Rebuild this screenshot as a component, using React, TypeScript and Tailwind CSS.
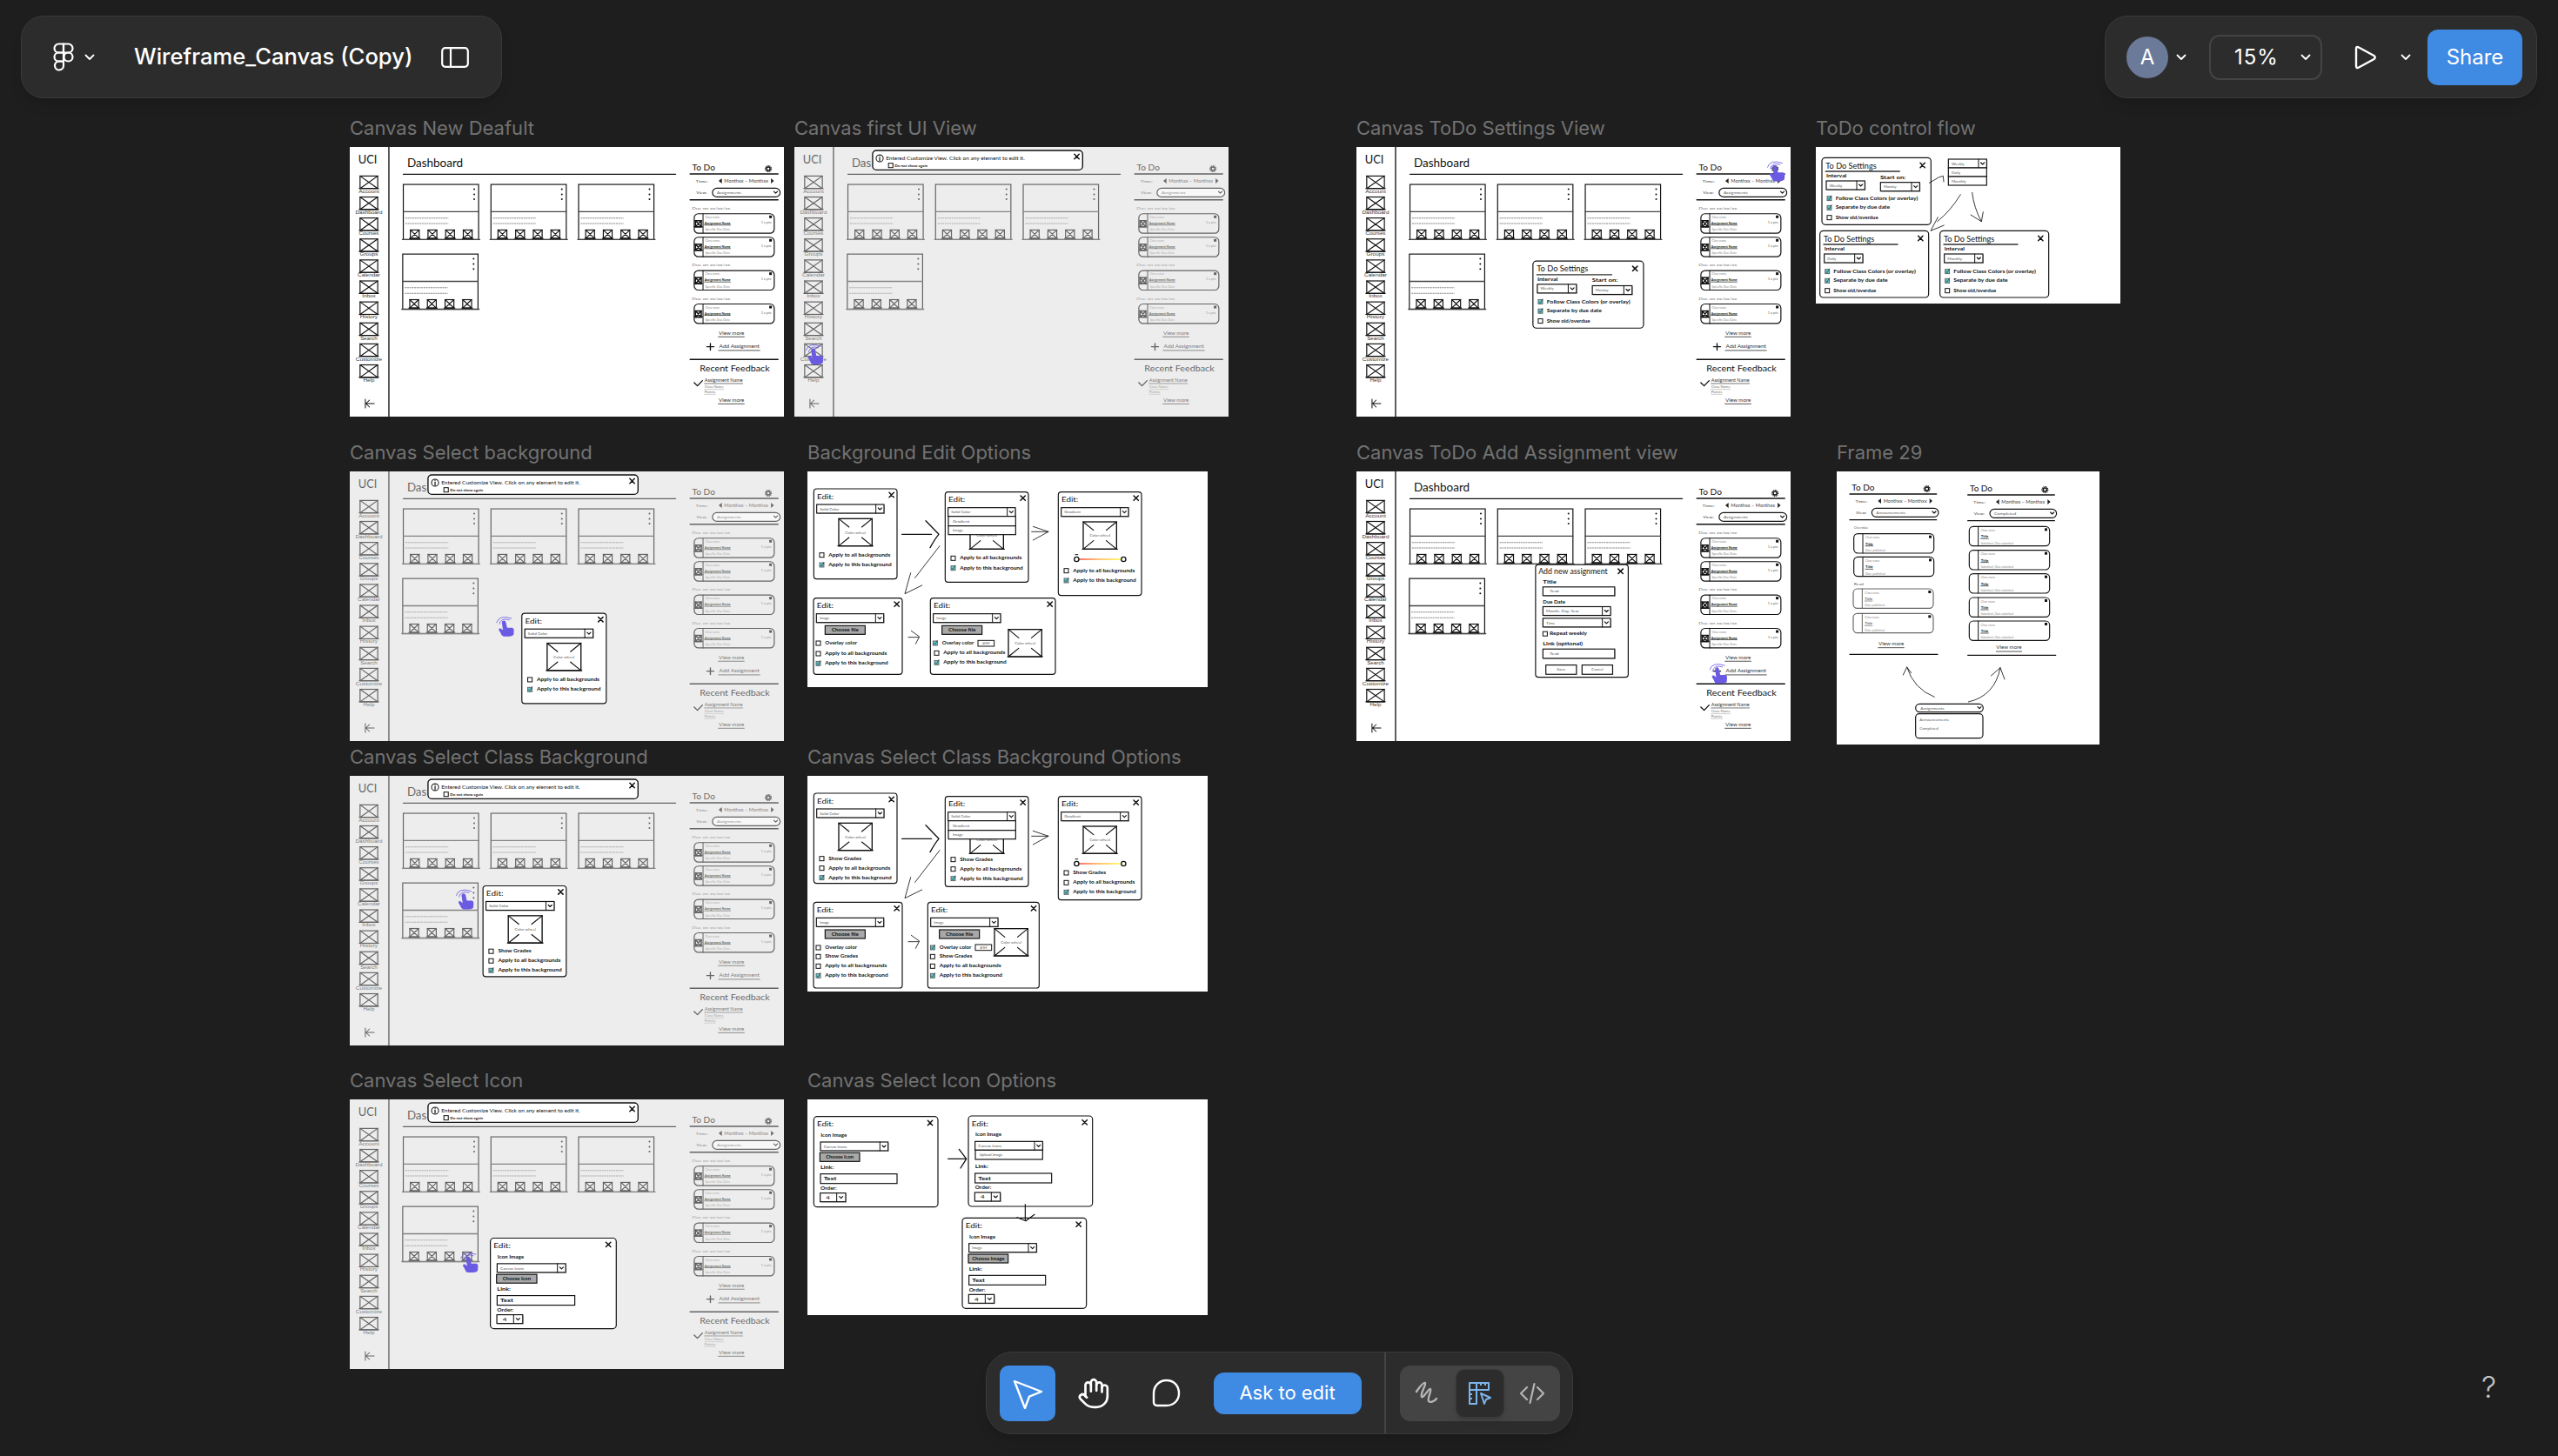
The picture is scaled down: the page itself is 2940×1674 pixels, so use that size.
import React from "react";
import { Hand } from "lucide-react";

const HW = '"Lato","Open Sans",sans-serif';
const AR = '"Liberation Sans",Arial,sans-serif';

type TP = { x: number; y: number; s?: number; w?: number; c?: string; b?: boolean; a?: "start" | "middle"; f?: string; children: React.ReactNode };
function T({ x, y, s = 16, w, c = "#111", b = false, a = "start", f = HW, children }: TP) {
  return (
    <text x={x} y={y} fontSize={s} fill={c} fontWeight={b ? 700 : 400} textAnchor={a} fontFamily={f} textLength={w} lengthAdjust={w ? "spacingAndGlyphs" : undefined}>
      {children}
    </text>
  );
}
function L({ d, w = 3, c = "#111" }: { d: string; w?: number; c?: string }) {
  return <path d={d} fill="none" stroke={c} strokeWidth={w} strokeLinecap="round" strokeLinejoin="round" />;
}
function R({ x, y, w, h, r = 0, sw = 3.5, fill = "#fff", c = "#111" }: { x: number; y: number; w: number; h: number; r?: number; sw?: number; fill?: string; c?: string }) {
  return <rect x={x} y={y} width={w} height={h} rx={r} fill={fill} stroke={c} strokeWidth={sw} />;
}
function XBox({ x, y, w, h, sw = 3.5, fill = "none" }: { x: number; y: number; w: number; h: number; sw?: number; fill?: string }) {
  return (
    <g>
      <rect x={x} y={y} width={w} height={h} fill={fill} stroke="#111" strokeWidth={sw} />
      <L w={sw} d={`M${x} ${y}L${x + w} ${y + h}M${x + w} ${y}L${x} ${y + h}M${x - 3} ${y + h}H${x + w + 3}`} />
    </g>
  );
}
function CloseX({ x, y, z = 8, w = 4.5 }: { x: number; y: number; z?: number; w?: number }) {
  return <L w={w} d={`M${x - z} ${y - z}L${x + z} ${y + z}M${x + z} ${y - z}L${x - z} ${y + z}`} />;
}
function Chev({ x, y, z = 7 }: { x: number; y: number; z?: number }) {
  return <L w={3.5} d={`M${x - z} ${y - z / 2}L${x} ${y + z / 2}L${x + z} ${y - z / 2}`} />;
}
function Select({ x, y, w, h = 30, label, tw, s = 12 }: { x: number; y: number; w: number; h?: number; label: string; tw?: number; s?: number }) {
  return (
    <g>
      <rect x={x + 3} y={y + 3} width={w} height={h} fill="#bdbdbd" />
      <R x={x} y={y} w={w} h={h} sw={3.5} />
      <L w={3} d={`M${x + w - 28} ${y}V${y + h}`} />
      <Chev x={x + w - 14} y={y + h / 2} z={6} />
      <T x={x + 11} y={y + h / 2 + 5} s={s} c="#555" w={tw}>{label}</T>
    </g>
  );
}
function Check({ x, y, on = false, z = 15 }: { x: number; y: number; on?: boolean; z?: number }) {
  return (
    <g>
      <rect x={x} y={y} width={z} height={z} fill={on ? "#63c9cf" : "#fff"} stroke={on ? "#555" : "#111"} strokeWidth={on ? 2.5 : 3} />
      {on && <L w={2} c="#222" d={`M${x + 3} ${y + 8}L${x + 7} ${y + 12}L${x + z} ${y - 2}`} />}
    </g>
  );
}
function Row({ x, y, label, on, w, tx = 31 }: { x: number; y: number; label: string; on?: boolean; w: number; tx?: number }) {
  return (
    <g>
      <Check x={x} y={y - 12} on={on} />
      <T x={x + tx} y={y} s={19} w={w} b>{label}</T>
    </g>
  );
}
function ImageBox({ x, y, w = 115, h = 94, label = "Color wheel" }: { x: number; y: number; w?: number; h?: number; label?: string }) {
  const cx = x + w / 2;
  const cy = y + h / 2;
  return (
    <g>
      <R x={x} y={y} w={w} h={h} sw={4} />
      <L w={3.5} d={`M${x} ${y}L${cx - 22} ${cy - 18}M${x + w} ${y}L${cx + 22} ${cy - 18}M${x} ${y + h}L${cx - 22} ${cy + 18}M${x + w} ${y + h}L${cx + 22} ${cy + 18}M${x - 3} ${y + h}H${x + w + 3}`} />
      <T x={cx} y={cy + 5} s={12} c="#666" a="middle" w={72}>{label}</T>
    </g>
  );
}
function GrayBtn({ x, y, w, h = 30, label, tw }: { x: number; y: number; w: number; h?: number; label: string; tw: number }) {
  return (
    <g>
      <R x={x} y={y} w={w} h={h} fill="#a8a8a8" sw={3.5} />
      <T x={x + w / 2} y={y + h / 2 + 6} s={18} a="middle" w={tw} b>{label}</T>
    </g>
  );
}

type Rw = { label: string; y: number; on?: boolean; w?: number; cx?: number; tx?: number };
const ALL = "Apply to all backgrounds";
const THIS = "Apply to this background";
function EditDialog({ x, y, w = 287, h = 311, sel = "Solid Color", rows, img, slider, button, open, input }: { x: number; y: number; w?: number; h?: number; sel?: string; rows: Rw[]; img?: [number, number]; slider?: boolean; button?: boolean; open?: boolean; input?: boolean }) {
  return (
    <g transform={`translate(${x} ${y})`}>
      <R x={0} y={0} w={w} h={h} r={10} sw={3.5} />
      <T x={11} y={35} s={25} w={58}>Edit:</T>
      <CloseX x={w - 19} y={21} />
      {img && <ImageBox x={img[0]} y={img[1]} />}
      <Select x={10} y={54} w={232} label={sel} tw={sel === "Solid Color" ? 66 : sel === "Gradient" ? 56 : 34} />
      {open && (
        <g>
          <R x={11} y={84} w={232} h={33} sw={3.5} />
          <R x={11} y={117} w={232} h={30} sw={3.5} />
          <T x={26} y={105} s={12} c="#555" w={58}>Gradient</T>
          <T x={26} y={136} s={12} c="#555" w={36}>Image</T>
        </g>
      )}
      {button && <GrayBtn x={40} y={95} w={138} label="Choose file" tw={94} />}
      {slider && (
        <g>
          <defs>
            <linearGradient id="hue" x1="0" x2="1" y1="0" y2="0">
              <stop offset="0" stopColor="#f22" />
              <stop offset="0.5" stopColor="#fa3" />
              <stop offset="1" stopColor="#ff2" />
            </linearGradient>
          </defs>
          <rect x={63} y={230} width={162} height={4} fill="url(#hue)" />
          <circle cx={63} cy={232} r={8} fill="#fff" stroke="#111" strokeWidth={4} />
          <circle cx={225} cy={232} r={8} fill="#fff" stroke="#111" strokeWidth={4} />
          <L w={3} d="M59 216H67" />
        </g>
      )}
      {input && (
        <g>
          <R x={164} y={146} w={56} h={20} sw={3} />
          <T x={192} y={160} s={10} c="#666" a="middle" w={26}>#fff</T>
        </g>
      )}
      {rows.map((r) => (
        <Row key={r.label} x={r.cx ?? 20} y={r.y} label={r.label} on={r.on} w={r.w ?? 213} tx={r.tx ?? 31} />
      ))}
    </g>
  );
}
function IconDialog({ x, y, sel = "Canvas Icons", btn = "Choose Icon", drop }: { x: number; y: number; sel?: string; btn?: string; drop?: boolean }) {
  return (
    <g transform={`translate(${x} ${y})`}>
      <R x={0} y={0} w={428} h={312} r={12} sw={3.5} />
      <T x={11} y={35} s={25} w={58}>Edit:</T>
      <CloseX x={401} y={22} />
      <T x={24} y={70} s={18} w={90} b>Icon Image</T>
      {!drop && <GrayBtn x={21} y={125} w={137} label={btn} tw={btn === "Choose Icon" ? 96 : 112} />}
      <Select x={23} y={88} w={233} label={sel} tw={sel === "Image" ? 34 : 80} />
      {drop && (
        <g>
          <R x={24} y={118} w={232} h={32} sw={3.5} />
          <T x={38} y={139} s={12} c="#555" w={80}>Upload Image</T>
        </g>
      )}
      <T x={23} y={181} s={18} w={46} b>Link:</T>
      <R x={23} y={198} w={264} h={33} sw={3.5} />
      <T x={34} y={221} s={18} w={44} b>Text</T>
      <T x={23} y={253} s={18} w={56} b>Order:</T>
      <rect x={25} y={267} width={88} height={30} fill="#bdbdbd" />
      <R x={22} y={264} w={88} h={30} sw={3.5} />
      <L w={3} d="M79 264V294" />
      <T x={49} y={286} s={18} a="middle" w={14}>4</T>
      <Chev x={94} y={279} z={6} />
    </g>
  );
}
function SettingsDialog({ x, y, sel, start, w = 376, h = 231 }: { x: number; y: number; sel: string; start?: boolean; w?: number; h?: number }) {
  return (
    <g transform={`translate(${x} ${y})`}>
      <R x={0} y={0} w={w} h={h} r={12} sw={3.5} />
      <T x={13} y={37} s={26} w={175}>To Do Settings</T>
      <L w={4} d="M13 47H268" c="#333" />
      <CloseX x={347} y={26} />
      <T x={15} y={68} s={18} w={70} b>Interval</T>
      <Select x={15} y={80} w={133} label={sel} tw={sel === "Monthly" ? 50 : sel === "Daily" ? 30 : 44} />
      {start && (
        <g>
          <T x={201} y={73} s={18} w={88} b>Start on:</T>
          <Select x={202} y={85} w={135} label="Monday" tw={44} />
        </g>
      )}
      <Row x={18} y={145} label="Follow Class Colors (or overlay)" on w={284} tx={29} />
      <Row x={18} y={177} label="Separate by due date" on w={187} tx={29} />
      <Row x={18} y={211} label="Show old/overdue" w={147} tx={29} />
    </g>
  );
}
function AddDialog({ x, y }: { x: number; y: number }) {
  return (
    <g transform={`translate(${x} ${y})`}>
      <R x={0} y={0} w={315} h={388} r={10} sw={3.5} />
      <T x={10} y={33} s={26} w={235}>Add new assignment</T>
      <CloseX x={289} y={23} />
      <T x={25} y={65} s={18} w={46} b>Title</T>
      <rect x={28} y={80} width={244} height={30} fill="#bdbdbd" />
      <R x={25} y={77} w={244} h={30} />
      <T x={48} y={96} s={12} c="#555" w={32}>Text</T>
      <T x={25} y={134} s={18} w={76} b>Due Date</T>
      <Select x={25} y={145} w={230} label="Month, Day, Year" tw={112} />
      <Select x={25} y={185} w={230} label="Time" tw={30} />
      <Check x={25} y={231} />
      <T x={48} y={243} s={18} w={127} b>Repeat weekly</T>
      <T x={25} y={279} s={18} w={135} b>Link (optional)</T>
      <rect x={28} y={294} width={244} height={32} fill="#bdbdbd" />
      <R x={25} y={291} w={244} h={32} />
      <T x={48} y={311} s={12} c="#555" w={32}>Text</T>
      <R x={35} y={346} w={104} h={32} />
      <T x={87} y={366} s={12} c="#555" a="middle" w={30}>Save</T>
      <R x={158} y={346} w={104} h={32} />
      <T x={210} y={366} s={12} c="#555" a="middle" w={40}>Cancel</T>
    </g>
  );
}
function Pointer({ x, y }: { x: number; y: number }) {
  return (
    <g transform={`translate(${x} ${y})`}>
      <path d="M-24 5Q-15 -25 28 -10M-15 10Q-8 -15 20 -5" fill="none" stroke="#6a5be2" strokeWidth={2.5} />
      <path d="M-6 4Q-6 -3 1 -3Q7 -3 8 4L12 22L30 22Q36 24 35 32L34 46Q30 52 18 52L0 52Q-8 50 -10 40L-16 30Q-18 22 -10 24L-2 30Z" fill="#6a5be2" />
    </g>
  );
}
function Banner() {
  return (
    <g>
      <R x={303} y={160} w={714} h={67} r={13} sw={4} />
      <circle cx={327} cy={187} r={12} fill="#fff" stroke="#111" strokeWidth={3} />
      <L w={3.5} d="M327 184V195M327 178V179" />
      <T x={348} y={193} s={19} w={472}>Entered Customize View. Click on any element to edit it.</T>
      <Check x={357} y={204} />
      <T x={378} y={217} s={13} b w={112}>Do not show again</T>
      <CloseX x={997} y={181} />
    </g>
  );
}
function Gear({ x, y }: { x: number; y: number }) {
  return (
    <g>
      <circle cx={x} cy={y} r={10} fill="none" stroke="#111" strokeWidth={4} strokeDasharray="3 2" />
      <circle cx={x} cy={y} r={6} fill="none" stroke="#111" strokeWidth={4} />
    </g>
  );
}
function TodoHead({ x, y, view }: { x: number; y: number; view: string }) {
  return (
    <g>
      <T x={x + 7} y={y - 12} s={26} w={78}>To Do</T>
      <Gear x={x + 266} y={y - 18} />
      <L w={4} d={`M${x} ${y}H${x + 299}`} />
      <T x={x + 19} y={y + 29} s={13} c="#444" w={42}>Time:</T>
      <path d={`M${x + 108} ${y + 15}V${y + 33}L${x + 97} ${y + 24}Z`} fill="#222" />
      <T x={x + 116} y={y + 29} s={14} c="#444" w={150}>Monthxx – Monthxx</T>
      <path d={`M${x + 275} ${y + 15}V${y + 33}L${x + 285} ${y + 24}Z`} fill="#222" />
      <T x={x + 21} y={y + 68} s={13} c="#444" w={37}>View:</T>
      <R x={x + 76} y={y + 49} w={230} h={30} r={15} sw={3.5} />
      <T x={x + 91} y={y + 68} s={13} c="#555" w={view === "Assignments" ? 82 : view === "Completed" ? 76 : 100}>{view}</T>
      <Chev x={x + 291} y={y + 63} z={6} />
      <L w={4} d={`M${x} ${y + 89}H${x + 299}`} />
    </g>
  );
}
function Card({ x, y }: { x: number; y: number }) {
  return (
    <g>
      <R x={x} y={y} w={256} h={190} sw={3.5} fill="none" />
      <L w={4} c="#444" d={`M${x} ${y + 94}H${x + 256}M${x - 3} ${y + 190}H${x + 260}`} />
      {[16, 34, 51].map((d) => (
        <circle key={d} cx={x + 241} cy={y + d} r={3} fill="#111" />
      ))}
      <path d={`M${x + 7} ${y + 116}H${x + 153}M${x + 7} ${y + 135}H${x + 153}`} stroke="#888" strokeWidth={3} strokeDasharray="6 2" fill="none" />
      {[39, 99, 159, 219].map((d) => (
        <XBox key={d} x={x + d - 15} y={y + 157} w={30} h={29} sw={3.5} />
      ))}
    </g>
  );
}
function TodoCard({ y, label }: { y: number; label?: string }) {
  return (
    <g>
      {label && <T x={1200} y={y - 14} s={12} c="#777" w={130}>{label}</T>}
      <R x={1208} y={y} w={272} h={67} r={14} sw={3.5} fill="none" />
      <L w={3} d={`M1238 ${y}V${y + 67}`} />
      <XBox x={1212} y={y + 24} w={20} h={21} sw={4.5} />
      <T x={1245} y={y + 15} s={10} c="#888" w={50}>Class name</T>
      <T x={1243} y={y + 36} s={12} b w={88}>Assignment Name</T>
      <L w={2} d={`M1243 ${y + 39}H1331`} />
      <T x={1435} y={y + 33} s={11} c="#666" w={35}>1 x pts</T>
      <T x={1245} y={y + 58} s={10} c="#888" w={85}>Specific Due Date</T>
      <rect x={1463} y={y + 6} width={9} height={9} fill="#111" />
    </g>
  );
}
const NAV = [
  ["Account", 70],
  ["Dashboard", 92],
  ["Courses", 68],
  ["Groups", 62],
  ["Calendar", 76],
  ["Inbox", 46],
  ["History", 60],
  ["Search", 58],
  ["Customize", 90],
  ["Help", 38],
] as const;
function CanvasBase({ dim }: { dim?: boolean }) {
  return (
    <g>
      <L w={4} d="M170 148V1077" />
      <T x={66} y={205} s={38} w={64}>UCI</T>
      {NAV.map(([n, w], i) => (
        <g key={n}>
          <XBox x={72} y={248 + i * 72.3} w={60} h={43} sw={3.5} />
          <T x={102} y={306 + i * 72.3} s={18} c="#333" a="middle" f={AR} w={w}>{n}</T>
        </g>
      ))}
      <L w={3} d="M90 1017V1047M90 1032H120M104 1020L92 1032L104 1044" />
      <T x={232} y={217} s={40} w={dim ? 66 : 190}>{dim ? "Das" : "Dashboard"}</T>
      <L w={4} d="M219 242H1145" />
      <Card x={219} y={277} />
      <Card x={517} y={277} />
      <Card x={815} y={277} />
      <Card x={217} y={517} />
      <TodoHead x={1194} y={241} view="Assignments" />
      <TodoCard y={378} label="Due on xx/xx/xx" />
      <TodoCard y={459} />
      <TodoCard y={574} label="Due on xx/xx/xx" />
      <TodoCard y={689} label="Due on xx/xx/xx" />
      <T x={1291} y={795} s={15} c="#333" w={87}>View more</T>
      <L w={2.5} c="#333" d="M1290 802H1378" />
      <L w={4} d="M1263 825V848M1251 836H1275" />
      <T x={1293} y={840} s={17} c="#333" w={137}>Add Assignment</T>
      <L w={2.5} c="#333" d="M1291 849H1431" />
      <L w={4} d="M1194 880H1493" />
      <T x={1227} y={921} s={30} w={238}>Recent Feedback</T>
      <L w={4} d="M1208 960L1219 971L1236 953" />
      <T x={1243} y={958} s={15} c="#333" w={130}>Assignment Name</T>
      <L w={2} c="#333" d="M1243 963H1373" />
      <T x={1243} y={978} s={10} c="#777" w={65}>Class Name</T>
      <L w={1.5} c="#999" d="M1243 983H1308" />
      <T x={1243} y={995} s={10} c="#777" w={37}>Points</T>
      <L w={1.5} c="#999" d="M1243 1000H1280" />
      <T x={1291} y={1025} s={15} c="#333" w={87}>View more</T>
      <L w={2.5} c="#333" d="M1290 1033H1378" />
    </g>
  );
}

function Sheet({ className, label, vb, bg = "bg-white", children }: { className: string; label: string; vb: string; bg?: string; children: React.ReactNode }) {
  return (
    <div className={`absolute ${className} ${bg}`}>
      <div className="absolute left-0 bottom-full mb-[7px] whitespace-nowrap font-['Inter'] text-[22px] leading-[30px] text-[#727272]">{label}</div>
      <svg className="block w-full h-full" viewBox={vb} preserveAspectRatio="none">
        {children}
      </svg>
    </div>
  );
}
function CanvasSheet({ className, label, dim, children }: { className: string; label: string; dim?: boolean; children?: React.ReactNode }) {
  return (
    <Sheet className={`${className} w-[499px] h-[310px]`} label={label} vb="37 148 1476 929" bg={dim ? "bg-[#ededed]" : "bg-white"}>
      <g opacity={dim ? 0.62 : 1}>
        <CanvasBase dim={dim} />
      </g>
      {dim && <Banner />}
      {children}
    </Sheet>
  );
}
function Options({ className, label, grades }: { className: string; label: string; grades?: boolean }) {
  const a: Rw[] = grades
    ? [
        { label: "Show Grades", y: 230, w: 113 },
        { label: ALL, y: 263 },
        { label: THIS, y: 296, on: true, w: 217 },
      ]
    : [
        { label: ALL, y: 233 },
        { label: THIS, y: 267, on: true, w: 217 },
      ];
  const b: Rw[] = a.map((r) => ({ ...r, y: r.y + (grades ? -8 : 0) }));
  const c: Rw[] = grades
    ? [
        { label: "Show Grades", y: 268, w: 113 },
        { label: ALL, y: 302 },
        { label: THIS, y: 335, on: true, w: 217 },
      ]
    : [
        { label: ALL, y: 276 },
        { label: THIS, y: 310, on: true, w: 217 },
      ];
  const d: Rw[] = grades
    ? [
        { label: "Overlay color", y: 161, cx: 9, w: 110 },
        { label: "Show Grades", y: 192, cx: 9, w: 113 },
        { label: ALL, y: 225, cx: 9 },
        { label: THIS, y: 258, on: true, cx: 9, w: 217 },
      ]
    : [
        { label: "Overlay color", y: 160, cx: 9, w: 110 },
        { label: ALL, y: 196, cx: 9 },
        { label: THIS, y: 230, on: true, cx: 9, w: 217 },
      ];
  const e: Rw[] = grades
    ? [
        { label: "Overlay color", y: 161, on: true, cx: 9, w: 110 },
        { label: "Show Grades", y: 192, cx: 9, w: 113 },
        { label: ALL, y: 225, cx: 9 },
        { label: THIS, y: 258, on: true, cx: 9, w: 217 },
      ]
    : [
        { label: "Overlay color", y: 160, on: true, cx: 9, w: 110 },
        { label: ALL, y: 194, cx: 14 },
        { label: THIS, y: 227, on: true, cx: 14, w: 217 },
      ];
  const dh = grades ? 296 : 263;
  const dy = grades ? 436 : 437;
  return (
    <Sheet className={`${className} w-[460px] h-[248px]`} label={label} vb="0 0 1380 744">
      <EditDialog x={22} y={60} rows={a} img={[86, 103]} />
      <EditDialog x={475} y={71} rows={b} img={[86, 103]} open />
      <EditDialog x={865} y={71} h={357} sel="Gradient" rows={c} img={[86, 103]} slider />
      <EditDialog x={21} y={dy} w={306} h={dh} sel="Image" rows={d} button />
      <EditDialog x={grades ? 415 : 424} y={dy} w={grades ? 384 : 431} h={dh} sel="Image" rows={e} button input img={grades ? [230, 91] : [269, 108]} />
      <L w={4} d="M326 217H428M408 170L453 217Q440 232 423 263" />
      <L w={2.5} d="M773 208H831M778 190L831 208L778 237" />
      <L w={2.5} d="M456 257L371 367M356 350L336 422L395 393" />
      <L w={2.5} d="M348 572H383M358 550L386 570L373 595" />
    </Sheet>
  );
}
function MiniCard({ x, y, w, title, sub, subw, c = "#111" }: { x: number; y: number; w: number; title: string; sub: string; subw: number; c?: string }) {
  return (
    <g>
      <R x={x} y={y} w={w} h={67} r={14} sw={3.5} fill="none" c={c} />
      <L w={3} c={c} d={`M${x + 31} ${y}V${y + 67}`} />
      <T x={x + 40} y={y + 17} s={11} c="#888" w={50}>Class name</T>
      <T x={x + 40} y={y + 39} s={13} b c={c} w={26}>{title}</T>
      <L w={2} c={c} d={`M${x + 40} ${y + 42}H${x + 66}`} />
      <T x={x + 40} y={y + 61} s={11} c="#888" w={subw}>{sub}</T>
      <rect x={x + w - 17} y={y + 6} width={9} height={9} fill="#111" />
    </g>
  );
}

/* ----------- chrome icons ----------- */
const SmallChev = () => (
  <svg width="12" height="8" viewBox="0 0 12 8" fill="none" stroke="#fff" strokeWidth="1.8" strokeLinecap="round" strokeLinejoin="round">
    <path d="M1.5 1.5L6 6L10.5 1.5" />
  </svg>
);
const FigmaLogo = () => (
  <svg width="24" height="33" viewBox="0 0 24 33" fill="none" stroke="#fff" strokeWidth="2.2" strokeLinejoin="round">
    <path d="M12 1.5H6.5a5 5 0 0 0 0 10H12z" />
    <path d="M12 1.5h5.5a5 5 0 0 1 0 10H12z" />
    <path d="M12 11.5H6.5a5 5 0 0 0 0 10H12z" />
    <circle cx="17.5" cy="16.5" r="5" />
    <path d="M12 21.5H6.5a5 5 0 1 0 5.5 5z" />
  </svg>
);
const PanelIcon = () => (
  <svg width="32" height="24" viewBox="0 0 32 24" fill="none" stroke="#fff" strokeWidth="2.2">
    <rect x="1.2" y="1.2" width="29.6" height="21.6" rx="3.5" />
    <path d="M11 1.2V22.8" />
  </svg>
);
const PlayIcon = () => (
  <svg width="26" height="28" viewBox="0 0 26 28" fill="none" stroke="#fff" strokeWidth="2.4" strokeLinejoin="round">
    <path d="M2 4Q2 1 5 2.5L22.5 12Q25 14 22.5 16L5 25.5Q2 27 2 24Z" />
  </svg>
);

export default function App() {
  return (
    <div className="relative w-[2940px] h-[1674px] overflow-hidden bg-[#1e1e1e] font-['Inter',sans-serif] text-white">
      {/* free canvas */}
      <CanvasSheet className="left-[402px] top-[169px]" label="Canvas New Deafult" />
      <CanvasSheet className="left-[913px] top-[169px]" label="Canvas first UI View" dim>
        <Pointer x={100} y={845} />
      </CanvasSheet>
      <CanvasSheet className="left-[1559px] top-[169px]" label="Canvas ToDo Settings View">
        <Pointer x={1458} y={214} />
        <SettingsDialog x={637} y={541} sel="Weekly" start />
      </CanvasSheet>
      <Sheet className="left-[2087px] top-[169px] w-[350px] h-[180px]" label="ToDo control flow" vb="0 0 1050 540">
        <SettingsDialog x={21} y={37} sel="Weekly" start />
        <SettingsDialog x={14} y={289} sel="Daily" w={375} h={230} />
        <SettingsDialog x={428} y={289} sel="Monthly" w={375} h={230} />
        <Select x={457} y={42} w={132} label="Weekly" tw={44} />
        <R x={457} y={72} w={132} h={30} sw={3.5} />
        <R x={457} y={102} w={132} h={30} sw={3.5} />
        <T x={468} y={92} s={12} c="#555" w={30}>Daily</T>
        <T x={468} y={122} s={12} c="#555" w={50}>Monthly</T>
        <L w={2.5} d="M391 124L425 104L439 100L441 120" />
        <L w={2.5} d="M499 164Q465 220 419 257M421 242L396 289L442 270" />
        <L w={2.5} d="M539 157Q545 210 571 257M534 234L571 257L577 224" />
      </Sheet>

      <CanvasSheet className="left-[402px] top-[542px]" label="Canvas Select background" dim>
        <Pointer x={560} y={665} />
        <EditDialog x={622} y={637} rows={[{ label: ALL, y: 233 }, { label: THIS, y: 267, on: true, w: 217 }]} img={[86, 103]} />
      </CanvasSheet>
      <Options className="left-[928px] top-[542px]" label="Background Edit Options" />
      <CanvasSheet className="left-[1559px] top-[542px]" label="Canvas ToDo Add Assignment view">
        <AddDialog x={646} y={469} />
        <Pointer x={1262} y={827} />
      </CanvasSheet>
      <Sheet className="left-[2111px] top-[542px] w-[302px] h-[314px]" label="Frame 29" vb="0 0 906 942">
        <TodoHead x={45} y={78} view="Announcements" />
        <T x={59} y={197} s={12} c="#666" w={50}>Overdue</T>
        <MiniCard x={59} y={215} w={276} title="Title" sub="Date published" subw={68} />
        <MiniCard x={59} y={295} w={276} title="Title" sub="Date published" subw={68} />
        <T x={59} y={393} s={12} c="#666" w={34}>Read</T>
        <MiniCard x={57} y={405} w={276} title="Title" sub="Date published" subw={68} c="#666" />
        <MiniCard x={57} y={490} w={276} title="Title" sub="Date published" subw={68} c="#666" />
        <T x={144} y={599} s={16} c="#333" w={88}>View more</T>
        <L w={2.5} c="#333" d="M143 608H232" />
        <L w={4} d="M45 631H348" />

        <TodoHead x={452} y={81} view="Completed" />
        {[190, 272, 353, 435, 516].map((y) => (
          <MiniCard key={y} x={457} y={y} w={277} title="Title" sub="Submitted | Date submitted" subw={112} />
        ))}
        <T x={550} y={612} s={16} c="#333" w={88}>View more</T>
        <L w={2.5} c="#333" d="M550 621H638" />
        <L w={4} d="M452 634H755" />

        <L w={2.5} d="M337 778Q265 750 242 675M229 702L242 675L257 695" />
        <L w={2.5} d="M454 795Q545 775 564 677M532 705L564 677L579 717" />
        <R x={272} y={802} w={233} h={28} r={14} sw={3.5} />
        <T x={289} y={821} s={13} c="#555" w={82}>Assignments</T>
        <Chev x={492} y={815} z={6} />
        <R x={272} y={836} w={232} h={84} r={12} sw={3.5} />
        <T x={286} y={860} s={13} c="#555" w={100}>Announcements</T>
        <T x={286} y={891} s={13} c="#555" w={64}>Completed</T>
      </Sheet>

      <CanvasSheet className="left-[402px] top-[892px]" label="Canvas Select Class Background" dim>
        <Pointer x={423} y={556} />
        <EditDialog
          x={490}
          y={527}
          w={283}
          h={313}
          rows={[
            { label: "Show Grades", y: 230, w: 113 },
            { label: ALL, y: 263 },
            { label: THIS, y: 296, on: true, w: 217 },
          ]}
          img={[86, 103]}
        />
      </CanvasSheet>
      <Options className="left-[928px] top-[892px]" label="Canvas Select Class Background Options" grades />

      <CanvasSheet className="left-[402px] top-[1264px]" label="Canvas Select Icon" dim>
        <Pointer x={438} y={692} />
        <IconDialog x={515} y={626} />
      </CanvasSheet>
      <Sheet className="left-[928px] top-[1264px] w-[460px] h-[248px]" label="Canvas Select Icon Options" vb="0 0 1380 744">
        <IconDialog x={22} y={59} />
        <IconDialog x={555} y={57} drop />
        <IconDialog x={534} y={409} sel="Image" btn="Choose Image" />
        <L w={4} d="M485 205H548M523 172L548 205L528 237" />
        <L w={3.5} d="M751 362V417M723 407L753 419L783 397" />
      </Sheet>

      {/* floating UI */}
      <div className="absolute inset-0 flex flex-col justify-between pointer-events-none">
        <div className="flex items-start justify-between pl-[24px] pr-[24px] pt-[18px]">
          <div className="flex items-center h-[95px] w-[553px] pl-[36px] rounded-[26px] bg-[#2c2c2c] border border-[#3a3a3a] shadow-lg">
            <FigmaLogo />
            <span className="ml-[12px]"><SmallChev /></span>
            <span className="ml-[45px] text-[25.6px] font-medium whitespace-nowrap">Wireframe_Canvas (Copy)</span>
            <span className="ml-[33px]"><PanelIcon /></span>
          </div>
          <div className="flex items-center h-[95px] w-[497px] rounded-[26px] bg-[#2c2c2c] border border-[#3a3a3a] shadow-lg">
            <div className="ml-[24px] w-[48px] h-[48px] rounded-full bg-[#6b7a99] flex items-center justify-center text-[24px]">A</div>
            <span className="ml-[9px]"><SmallChev /></span>
            <div className="ml-[26px] w-[130px] h-[52px] rounded-[12px] border-2 border-[#444444] flex items-center pl-[27px] text-[24px] relative">
              <span className="tracking-[1px]">15%</span>
              <span className="ml-[25px]"><SmallChev /></span>
            </div>
            <span className="ml-[37px]"><PlayIcon /></span>
            <span className="ml-[27px]"><SmallChev /></span>
            <div className="ml-[19px] w-[109px] h-[64px] rounded-[12px] bg-[#3f8ae3] flex items-center justify-center text-[24px]">Share</div>
          </div>
        </div>
        <div className="flex justify-center pb-[25px]">
          <div className="flex items-center h-[95px] w-[675px] rounded-[30px] bg-[#2c2c2c] border border-[#3a3a3a] shadow-lg">
            <div className="flex items-center h-full w-[459px] pl-[15px] border-r-2 border-[#444444]">
              <div className="w-[64px] h-[64px] rounded-[10px] bg-[#3f8ae3] flex items-center justify-center">
                <svg width="40" height="40" viewBox="0 0 40 40" fill="none" stroke="#fff" strokeWidth="2.4" strokeLinejoin="round">
                  <path d="M5 6L36 18L22 23.7L17 37Z" />
                </svg>
              </div>
              <span className="ml-[25px]"><Hand size={38} strokeWidth={1.7} /></span>
              <svg className="ml-[48px]" width="33" height="33" viewBox="0 0 33 33" fill="none" stroke="#fff" strokeWidth="2.4">
                <path d="M2 17C2 8 9 2 16.5 2C25 2 31 8 31 17C31 25 25 31 16.5 31H6Q2 31 2 27Z" />
              </svg>
              <div className="ml-[38px] w-[170px] h-[48px] rounded-[12px] bg-[#3f8ae3] flex items-center justify-center text-[22px]">Ask to edit</div>
            </div>
            <div className="ml-[16px] w-[184px] h-[64px] rounded-[12px] bg-[#444444] flex items-center">
              <svg className="ml-[17px]" width="27" height="27" viewBox="0 0 27 27" fill="none" stroke="#b4b4b4" strokeWidth="2.4" strokeLinecap="round">
                <path d="M2 12C6 6 10 1 12 2C14 3 6 14 8 18C10 20 16 8 18 9C20 10 14 20 16 23C18 25 23 23 25 20" />
              </svg>
              <div className="ml-[20px] w-[56px] h-[56px] rounded-[10px] bg-[#2c2c2c] border border-[#3a3a3a] shadow-md flex items-center justify-center">
                <svg width="28" height="28" viewBox="0 0 28 28" fill="none" stroke="#7db4ea" strokeWidth="2" strokeLinejoin="round">
                  <path d="M2 2H24V10H10V26H2ZM10 2V10M2 10H10M15 2V5M20 2V5M2 15H5M2 20H5" />
                  <path d="M15 14L26 19L21 21L19 26Z" />
                </svg>
              </div>
              <svg className="ml-[17px]" width="30" height="26" viewBox="0 0 30 26" fill="none" stroke="#b4b4b4" strokeWidth="2.2" strokeLinecap="round" strokeLinejoin="round">
                <path d="M9 6L2 13L9 20M21 6L28 13L21 20M17.5 2L12.5 24" />
              </svg>
            </div>
          </div>
        </div>
      </div>
      <div className="absolute left-[2852px] top-[1569px] text-[34px] font-light text-[#c4c4c4]">?</div>
    </div>
  );
}
